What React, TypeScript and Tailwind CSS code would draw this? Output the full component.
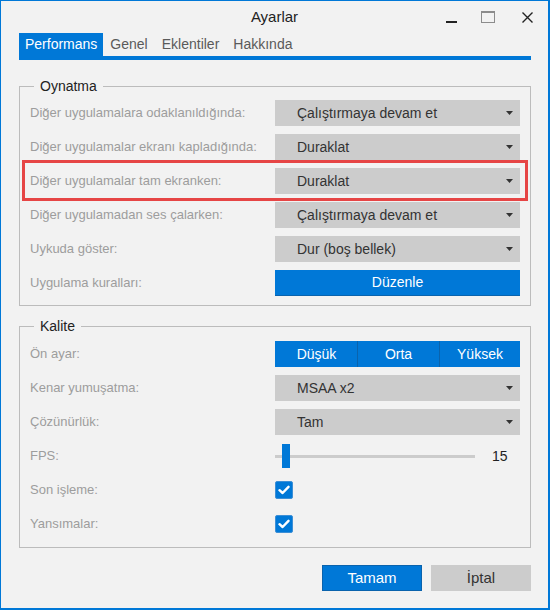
import { ReactNode } from 'react';

const font = { fontFamily: '"Liberation Sans", Arial, sans-serif' };

// Dropdown imitation
function Select({ value }: { value: string }) {
  return (
    <div className="w-[245px] h-[26px] bg-[#cccccc] flex items-center pl-[22px] pr-[7px] text-[14px] text-[#333333]">
      <span className="flex-1">{value}</span>
      <svg width="7" height="4" viewBox="0 0 7 4">
        <path d="M0 0 L7 0 L3.5 4 Z" fill="#333333" />
      </svg>
    </div>
  );
}

function Row({ label, children, highlight }: { label: string; children: ReactNode; highlight?: boolean }) {
  return (
    <div className="relative flex items-center h-[26px]">
      <div className="flex-1 text-[13px] text-[#9d9d9d]">{label}</div>
      {children}
      {highlight && (
        <div className="absolute -left-[8px] -right-[8px] -top-[8px] -bottom-[7px] border-[3px] border-[#e64545]" />
      )}
    </div>
  );
}

function Group({ title, children, className }: { title: string; children: ReactNode; className?: string }) {
  return (
    <fieldset className={`border border-[#bcbcbc] px-[10px] ${className ?? ''}`}>
      <legend className="ml-[4px] px-[6px] text-[14px] leading-[16px] text-[#222222]">{title}</legend>
      {children}
    </fieldset>
  );
}

function Check() {
  return (
    <div className="w-[18px] h-[18px] bg-[#0078d7] rounded-[2px] border border-[#3d8fd6] flex items-center justify-center">
      <svg width="12" height="10" viewBox="0 0 12 10">
        <path d="M1.5 5.2 L4.6 8 L10.5 1.8" fill="none" stroke="white" strokeWidth="2.4" strokeLinecap="round" strokeLinejoin="round" />
      </svg>
    </div>
  );
}

export default function App() {
  const tabs = ['Performans', 'Genel', 'Eklentiler', 'Hakkında'];

  return (
    <div style={font} className="w-[550px] h-[610px] bg-[#f2f2f2] border-[#0078d7] border-l border-t border-r-2 border-b-2 flex flex-col">
      {/* Title bar */}
      <div className="h-[32px] grid grid-cols-[1fr_auto_1fr] items-center">
        <div />
        <div className="text-[15px] text-[#222222] pt-[1px]">Ayarlar</div>
        <div className="flex items-center justify-end pr-[15px] h-full">
          <svg width="11" height="12" viewBox="0 0 11 12" className="mt-[2px]">
            <rect x="0" y="9" width="11" height="2" fill="#222222" />
          </svg>
          <svg width="14" height="12" viewBox="0 0 14 12" className="ml-[24px]">
            <rect x="0.5" y="0.5" width="13" height="11" fill="none" stroke="#8c8c8c" />
            <rect x="0" y="0" width="14" height="2" fill="#8c8c8c" />
          </svg>
          <svg width="11" height="11" viewBox="0 0 11 11" className="ml-[27px]">
            <path d="M0.5 0.5 L10.5 10.5 M10.5 0.5 L0.5 10.5" stroke="#222222" strokeWidth="1.4" />
          </svg>
        </div>
      </div>

      <div className="pl-[18px] pr-[17px] flex flex-col">
        {/* Tabs */}
        <div className="flex border-b-4 border-[#0078d7]">
          {tabs.map((t, i) => (
            <div
              key={t}
              className={
                i === 0
                  ? 'h-[23px] px-[6px] flex items-center text-[14px] bg-[#0078d7] text-white'
                  : 'h-[23px] px-[7px] flex items-center text-[14px] text-[#5a5a5a]'
              }
            >
              {t}
            </div>
          ))}
        </div>

        <Group title="Oynatma" className="mt-[18px] pt-[6px] pb-[9px]">
          <div className="flex flex-col gap-[8px]">
            <Row label="Diğer uygulamalara odaklanıldığında:">
              <Select value="Çalıştırmaya devam et" />
            </Row>
            <Row label="Diğer uygulamalar ekranı kapladığında:">
              <Select value="Duraklat" />
            </Row>
            <Row label="Diğer uygulamalar tam ekranken:" highlight>
              <Select value="Duraklat" />
            </Row>
            <Row label="Diğer uygulamadan ses çalarken:">
              <Select value="Çalıştırmaya devam et" />
            </Row>
            <Row label="Uykuda göster:">
              <Select value="Dur (boş bellek)" />
            </Row>
            <Row label="Uygulama kuralları:">
              <button className="w-[245px] h-[26px] bg-[#0078d7] border-b border-[#0a63ad] text-white text-[14px]">
                Düzenle
              </button>
            </Row>
          </div>
        </Group>

        <Group title="Kalite" className="mt-[12px] pt-[7px] pb-[10px]">
          <div className="flex flex-col gap-[8px]">
            <Row label="Ön ayar:">
              <div className="w-[245px] h-[26px] flex bg-[#0078d7] text-white text-[14px] pl-[1px]">
                <div className="w-[81px] flex items-center justify-center">Düşük</div>
                <div className="w-[82px] flex items-center justify-center border-l border-[#0a63ad]">Orta</div>
                <div className="flex-1 flex items-center justify-center border-l border-[#0a63ad]">Yüksek</div>
              </div>
            </Row>
            <Row label="Kenar yumuşatma:">
              <Select value="MSAA x2" />
            </Row>
            <Row label="Çözünürlük:">
              <Select value="Tam" />
            </Row>
            <Row label="FPS:">
              <div className="w-[245px] flex items-center">
                <div className="relative w-[200px] h-[3px] bg-[#cccccc]">
                  <div className="absolute left-[7px] -top-[11px] w-[8px] h-[24px] bg-[#0078d7]" />
                </div>
                <span className="ml-[17px] text-[14px] text-[#222222]">15</span>
              </div>
            </Row>
            <Row label="Son işleme:">
              <div className="w-[245px]">
                <Check />
              </div>
            </Row>
            <Row label="Yansımalar:">
              <div className="w-[245px]">
                <Check />
              </div>
            </Row>
          </div>
        </Group>

        {/* Footer buttons */}
        <div className="mt-[17px] flex justify-end gap-[9px]">
          <button className="w-[100px] h-[26px] bg-[#0078d7] border border-[#0a63ad] text-white text-[15px]">Tamam</button>
          <button className="w-[100px] h-[26px] bg-[#cccccc] text-[#333333] text-[15px]">İptal</button>
        </div>
      </div>
    </div>
  );
}
